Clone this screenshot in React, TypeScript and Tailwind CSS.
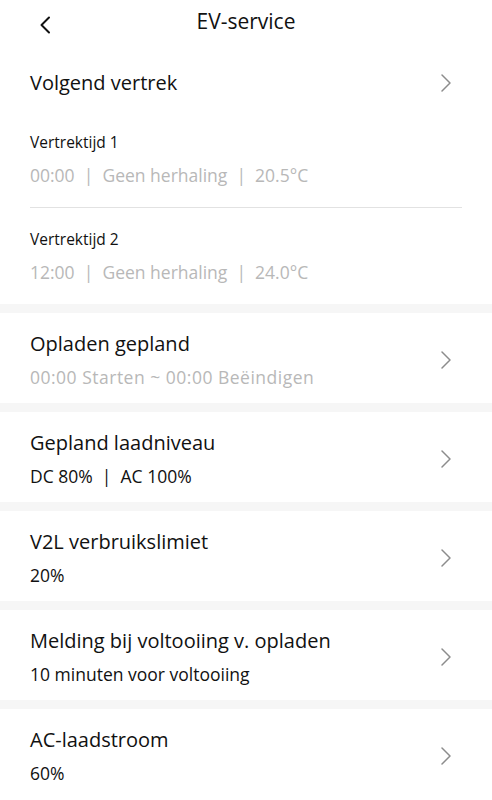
const font = { fontFamily: '"Open Sans", "Noto Sans", sans-serif' };

function Chevron() {
  return (
    <svg width="12" height="20" viewBox="0 0 12 20" fill="none" className="shrink-0">
      <path d="M2 2l8 8-8 8" stroke="#8c8c8c" strokeWidth="1.5" strokeLinecap="round" strokeLinejoin="round" />
    </svg>
  );
}

function BackArrow() {
  return (
    <svg width="12" height="18" viewBox="0 0 12 18" fill="none" className="absolute left-[39px] top-[16px]">
      <path d="M10 1.5L2.5 9l7.5 7.5" stroke="#111" strokeWidth="2" strokeLinecap="round" strokeLinejoin="round" />
    </svg>
  );
}

function Band() {
  return <div className="h-[9px] bg-[#f6f6f6]" />;
}

type Card = { title: string; sub: string; muted?: boolean };

const cards: Card[] = [
  { title: 'Opladen gepland', sub: '00:00 Starten ~ 00:00 Beëindigen', muted: true },
  { title: 'Gepland laadniveau', sub: 'DC 80%  |  AC 100%' },
  { title: 'V2L verbruikslimiet', sub: '20%' },
  { title: 'Melding bij voltooiing v. opladen', sub: '10 minuten voor voltooiing' },
  { title: 'AC-laadstroom', sub: '60%' },
];

function Departure({ name, detail }: { name: string; detail: string }) {
  return (
    <div className="pt-[19px] pb-[20px]">
      <div className="text-[15.5px] leading-[24px] text-[#111]">{name}</div>
      <div className="mt-[9px] text-[17.5px] leading-[24px] text-[#b8b8b8] whitespace-pre">{detail}</div>
    </div>
  );
}

export default function App() {
  return (
    <div className="w-[492px] min-h-[800px] bg-white overflow-hidden" style={font}>
      <header className="relative h-[44px] flex items-center justify-center">
        <BackArrow />
        <h1 className="text-[21px] text-[#111]">EV-service</h1>
      </header>

      <section>
        <div className="flex items-center justify-between pl-[30px] pr-[40px] pt-[25px] pb-[14px]">
          <span className="text-[20px] leading-[28px] text-[#111]">Volgend vertrek</span>
          <Chevron />
        </div>
        <div className="px-[30px]">
          <Departure name="Vertrektijd 1" detail="00:00  |  Geen herhaling  |  20.5°C" />
          <div className="h-px bg-[#e2e2e2]" />
          <Departure name="Vertrektijd 2" detail="12:00  |  Geen herhaling  |  24.0°C" />
        </div>
      </section>

      {cards.map((c) => (
        <div key={c.title}>
          <Band />
          <div className="flex items-center justify-between pl-[30px] pr-[40px] pt-[17px] pb-[14px]">
            <div>
              <div className="text-[20px] leading-[28px] text-[#111]">{c.title}</div>
              <div
                className={`mt-[7px] text-[17.5px] leading-[24px] whitespace-pre ${
                  c.muted ? 'text-[#b8b8b8] tracking-[0.5px]' : 'text-[#111]'
                }`}
              >
                {c.sub}
              </div>
            </div>
            <Chevron />
          </div>
        </div>
      ))}
    </div>
  );
}
